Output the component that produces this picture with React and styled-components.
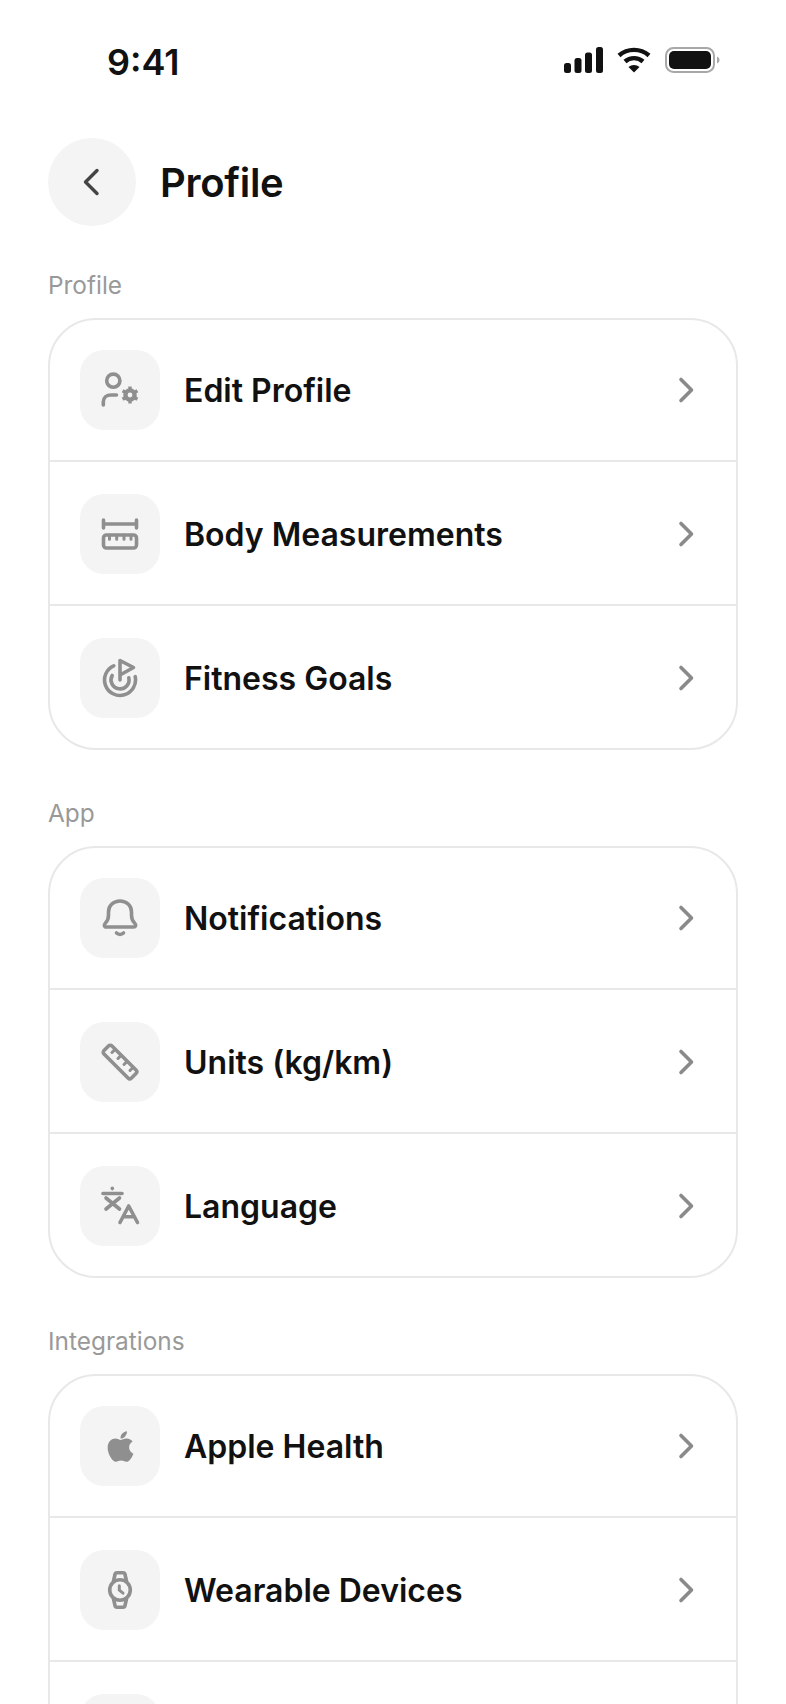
import React from "react";
import styled, { createGlobalStyle } from "styled-components";
import { FaApple } from "react-icons/fa";

const GlobalStyle = createGlobalStyle`
  html, body {
    margin: 0;
    padding: 0;
    background: #ffffff;
    font-family: "Inter", "Liberation Sans", sans-serif;
  }
`;

const Page = styled.div`
  width: 786px;
  height: 1704px;
  overflow: hidden;
  background: #ffffff;
  display: flex;
  flex-direction: column;
`;
const StatusBar = styled.div`
  height: 124px;
  flex-shrink: 0;
  padding: 0 66px 0 107px;
  display: flex;
  align-items: center;
  justify-content: space-between;
`;
const Time = styled.span`
  font-size: 36px;
  font-weight: 600;
  color: #111111;
`;
const StatusIcons = styled.div`
  display: flex;
  align-items: center;
  gap: 14px;
  margin-top: -4px;
`;
const Header = styled.div`
  display: flex;
  align-items: center;
  gap: 24px;
  padding: 14px 48px 0;
`;
const BackButton = styled.button`
  width: 88px;
  height: 88px;
  border: 0;
  padding: 0;
  border-radius: 50%;
  background: #f4f4f4;
  display: flex;
  align-items: center;
  justify-content: center;
`;
const Title = styled.h1`
  margin: 0;
  font-size: 40px;
  font-weight: 600;
  letter-spacing: -0.3px;
  color: #111111;
`;
const Sections = styled.div`
  padding: 44px 48px 0;
  display: flex;
  flex-direction: column;
  gap: 48px;
`;
const Section = styled.section`
  display: flex;
  flex-direction: column;
  gap: 18px;
`;
const SectionLabel = styled.div`
  font-size: 24.4px;
  line-height: 30px;
  color: #999999;
`;
const Card = styled.div`
  border: 2px solid #e8e8e8;
  border-radius: 48px;
  overflow: hidden;
`;
const Row = styled.div`
  padding: 30px 34px 30px 30px;
  display: flex;
  align-items: center;
  gap: 24px;
  & + & {
    padding-top: 32px;
    border-top: 2px solid #e8e8e8;
  }
`;
const IconBox = styled.div`
  width: 80px;
  height: 80px;
  flex-shrink: 0;
  border-radius: 24px;
  background: #f4f4f4;
  color: #8f8f8f;
  display: flex;
  align-items: center;
  justify-content: center;
`;
const RowLabel = styled.span`
  flex: 1;
  font-size: 32px;
  font-weight: 600;
  color: #111111;
`;

const Svg = ({ size = 40, children, ...rest }) => (
  <svg
    width={size}
    height={size}
    viewBox="0 0 40 40"
    fill="none"
    stroke="currentColor"
    strokeWidth="3.6"
    strokeLinecap="round"
    strokeLinejoin="round"
    {...rest}
  >
    {children}
  </svg>
);

const Chevron = () => (
  <Svg size={32} viewBox="0 0 32 32" stroke="#8a8a8a">
    <path d="M11 5.5 L21.5 16 L11 26.5" />
  </Svg>
);

const UserGear = () => (
  <Svg>
    <circle cx="13.3" cy="10.7" r="6.6" />
    <path d="M3.3 35 V32 C3.3 27.5 6.5 25 11 25 H16.5" />
    <circle cx="30" cy="25" r="4.6" strokeWidth="4.4" />
    <path
      strokeWidth="3.4"
      strokeLinecap="butt"
      d="M30 16.5 V19 M30 31 V33.5 M22.6 20.7 L24.8 22 M35.2 28 L37.4 29.3 M22.6 29.3 L24.8 28 M35.2 22 L37.4 20.7"
    />
  </Svg>
);

const Measure = () => (
  <Svg>
    <path d="M3.5 6 V14 M36.5 6 V14 M3.5 10 H36.5" />
    <rect x="3.5" y="21" width="33" height="13" rx="3" />
    <path d="M9.5 21 V25.3 M16.7 21 V25.3 M24 21 V25.3 M31 21 V25.3" strokeWidth="3" />
  </Svg>
);

const Goal = () => (
  <Svg>
    <path d="M13.7 7.8 A15.5 15.5 0 1 0 35.2 18.7" />
    <path d="M12.2 17.5 A9 9 0 1 0 28.8 19.8" />
    <path d="M20 22 V2.5 L33.5 9.5 L20 17" />
  </Svg>
);

const Bell = () => (
  <Svg>
    <path d="M5.5 25 C7.5 23 8.5 20.5 8.5 17 V14 C8.5 7.5 13.5 3 20 3 C26.5 3 31.5 7.5 31.5 14 V17 C31.5 20.5 32.5 23 34.5 25 C36.5 27 35.8 29 33.5 29 H6.5 C4.2 29 3.5 27 5.5 25 Z" />
    <path d="M16.5 35 C18.5 36.8 21.5 36.8 23.5 35" />
  </Svg>
);

const Ruler = () => (
  <Svg>
    <path d="M4 8.5 L8.5 4 C9.5 3 11 3 12 4 L36 28 C37 29 37 30.5 36 31.5 L31.5 36 C30.5 37 29 37 28 36 L4 12 C3 11 3 9.5 4 8.5 Z" />
    <path d="M15 7.5 L12 10.5 M21 13.5 L18 16.5 M27 19.5 L24 22.5 M33 25.5 L30 28.5" strokeWidth="3" />
  </Svg>
);

const Translate = () => (
  <Svg>
    <path d="M3 7.5 H22" />
    <path d="M12.3 2.4 V2.6" />
    <path d="M6 12 L19.5 23 M19.5 12 L6 23" />
    <path d="M20 36.5 L28.7 20 L37.5 36.5 M23 30.7 H34.5" />
  </Svg>
);

const Watch = () => (
  <Svg>
    <circle cx="20" cy="20" r="10.3" />
    <path d="M13.5 11 L15 4.5 C15.2 3.3 16 2.7 17 2.7 H23 C24 2.7 24.8 3.3 25 4.5 L26.5 11" />
    <path d="M13.5 29 L15 35.5 C15.2 36.7 16 37.3 17 37.3 H23 C24 37.3 24.8 36.7 25 35.5 L26.5 29" />
    <path d="M19.3 15.8 V20.2 L23 23.2" strokeWidth="3" />
  </Svg>
);

const sections = [
  {
    title: "Profile",
    rows: [
      { label: "Edit Profile", icon: <UserGear /> },
      { label: "Body Measurements", icon: <Measure /> },
      { label: "Fitness Goals", icon: <Goal /> },
    ],
  },
  {
    title: "App",
    rows: [
      { label: "Notifications", icon: <Bell /> },
      { label: "Units (kg/km)", icon: <Ruler /> },
      { label: "Language", icon: <Translate /> },
    ],
  },
  {
    title: "Integrations",
    rows: [
      { label: "Apple Health", icon: <FaApple size={35} /> },
      { label: "Wearable Devices", icon: <Watch /> },
      { label: "", icon: null },
    ],
  },
];

export default function App() {
  return (
    <Page>
      <GlobalStyle />
      <StatusBar>
        <Time>9:41</Time>
        <StatusIcons>
          <svg width="39" height="26" viewBox="0 0 39 26" fill="#111111">
            <rect x="0" y="16" width="7" height="10" rx="2.5" />
            <rect x="10.5" y="11" width="7" height="15" rx="2.5" />
            <rect x="21" y="5.5" width="7" height="20.5" rx="2.5" />
            <rect x="32" y="0" width="7" height="26" rx="2.5" />
          </svg>
          <svg width="34" height="26" viewBox="0 0 34 26" fill="none" stroke="#111111" strokeWidth="4.4">
            <path d="M2 8.5 C10.5 1 23.5 1 32 8.5" />
            <path d="M8 14.5 C13 10 21 10 26 14.5" />
            <path d="M17 25.5 L11.5 20 C14.5 17.3 19.5 17.3 22.5 20 Z" fill="#111111" stroke="none" />
          </svg>
          <svg width="55" height="26" viewBox="0 0 55 26" fill="none">
            <rect x="1" y="1" width="48" height="24" rx="7.5" stroke="#a8a8a8" strokeWidth="2" />
            <rect x="4" y="4" width="42" height="18" rx="5" fill="#111111" />
            <path d="M52 9.5 C53.8 10.2 54.5 11.5 54.5 13 C54.5 14.5 53.8 15.8 52 16.5 Z" fill="#a8a8a8" />
          </svg>
        </StatusIcons>
      </StatusBar>
      <Header>
        <BackButton aria-label="Back">
          <Svg size={32} viewBox="0 0 32 32" stroke="#444444" strokeWidth="3.4">
            <path d="M21 4.5 L9.5 16 L21 27.5" />
          </Svg>
        </BackButton>
        <Title>Profile</Title>
      </Header>
      <Sections>
        {sections.map((section) => (
          <Section key={section.title}>
            <SectionLabel>{section.title}</SectionLabel>
            <Card>
              {section.rows.map((row, i) => (
                <Row key={i}>
                  <IconBox>{row.icon}</IconBox>
                  <RowLabel>{row.label}</RowLabel>
                  {row.label && <Chevron />}
                </Row>
              ))}
            </Card>
          </Section>
        ))}
      </Sections>
    </Page>
  );
}
